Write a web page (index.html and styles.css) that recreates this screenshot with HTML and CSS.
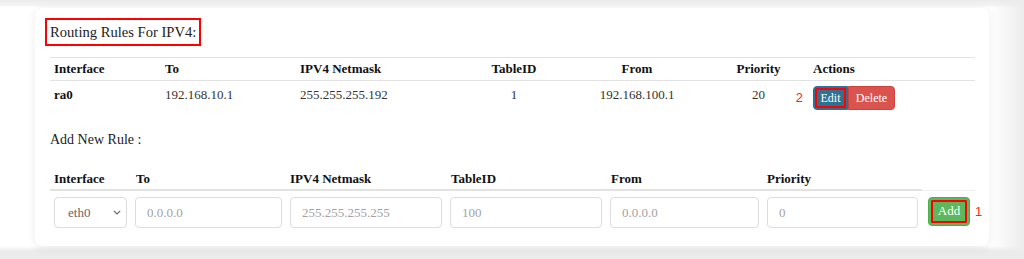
FILE: index.html
```html
<!DOCTYPE html>
<html lang="en">
<head>
  <meta charset="UTF-8">
  <title>Routing Rules</title>
  <link rel="stylesheet" href="styles.css">
</head>
<body>

  <div class="card">
    <h3 class="title">Routing Rules For IPV4:</h3>

    <table class="rules">
      <colgroup>
        <col style="width:111px">
        <col style="width:135px">
        <col style="width:154px">
        <col style="width:128px">
        <col style="width:118px">
        <col style="width:113px">
        <col>
      </colgroup>
      <thead>
        <tr>
          <th>Interface</th>
          <th>To</th>
          <th>IPV4 Netmask</th>
          <th class="center">TableID</th>
          <th class="center">From</th>
          <th class="center prio">Priority</th>
          <th>Actions</th>
        </tr>
      </thead>
      <tbody>
        <tr>
          <td class="bold">ra0</td>
          <td>192.168.10.1</td>
          <td>255.255.255.192</td>
          <td class="center">1</td>
          <td class="center">192.168.100.1</td>
          <td class="center prio">20</td>
          <td>
            <div class="actions">
              <span class="mark mark-left">2</span>
              <button class="btn btn-edit">Edit</button><button class="btn btn-delete">Delete</button>
            </div>
          </td>
        </tr>
      </tbody>
    </table>

    <p class="subtitle">Add New Rule :</p>

    <table class="new-rule">
      <colgroup>
        <col style="width:81px">
        <col style="width:155px">
        <col style="width:160px">
        <col style="width:160px">
        <col style="width:157px">
        <col style="width:159px">
        <col>
      </colgroup>
      <thead>
        <tr>
          <th>Interface</th>
          <th class="shift">To</th>
          <th>IPV4 Netmask</th>
          <th class="shift">TableID</th>
          <th class="shift">From</th>
          <th>Priority</th>
          <th class="blank"></th>
        </tr>
      </thead>
      <tbody>
        <tr>
          <td>
            <div class="select-wrap">
              <select class="field select">
                <option>eth0</option>
                <option>ra0</option>
              </select>
              <svg class="chevron" width="8" height="5" viewBox="0 0 8 5">
                <path d="M0.8 0.8 L4 4 L7.2 0.8" fill="none" stroke="#666" stroke-width="1.1"/>
              </svg>
            </div>
          </td>
          <td><input class="field" type="text" placeholder="0.0.0.0"></td>
          <td><input class="field" type="text" placeholder="255.255.255.255"></td>
          <td><input class="field" type="text" placeholder="100"></td>
          <td><input class="field" type="text" placeholder="0.0.0.0"></td>
          <td><input class="field" type="text" placeholder="0"></td>
          <td class="add-cell">
            <div class="actions">
              <button class="btn btn-add">Add</button>
              <span class="mark mark-right">1</span>
            </div>
          </td>
        </tr>
      </tbody>
    </table>
  </div>

</body>
</html>
```

FILE: styles.css
```css
body {
  margin: 0;
  padding: 8px 35px 12px 35px;
  font-family: "Liberation Serif", "Times New Roman", serif;
  color: #333;
  background:
    linear-gradient(to right, rgba(235, 235, 235, 0) 990px, #ececec 1024px),
    linear-gradient(#ebebeb 0, #f3f3f3 5px, #fff 8px, #fff 246px, #ebebeb 251px);
}

.card {
  background: #fff;
  border-radius: 8px;
  padding: 10px 14px 18px 15px;
  box-shadow: 0 2px 10px rgba(0, 0, 0, 0.08);
}

.title {
  display: inline-block;
  margin: 0 0 11px -5px;
  padding: 2px 3px 2px 3px;
  border: 2px solid #f00;
  font-size: 14.6px;
  font-weight: normal;
  line-height: 20px;
  color: #222;
}

table {
  width: 925px;
  border-collapse: collapse;
  table-layout: fixed;
  font-family: "Liberation Serif", "Times New Roman", serif;
}

th {
  text-align: left;
  font-size: 13px;
  font-weight: bold;
  color: #111;
  padding: 0 4px;
}

.rules th {
  line-height: 22px;
  border-top: 1px solid #e2e2e2;
  border-bottom: 1px solid #e2e2e2;
}

.rules td {
  font-size: 13px;
  line-height: 18px;
  padding: 5px 4px 6px 4px;
  vertical-align: top;
  color: #333;
}

.rules td.bold {
  font-weight: bold;
  color: #111;
}

.center {
  text-align: center;
}

.rules .prio {
  padding-left: 16px;
}

.actions {
  position: relative;
  display: flex;
  align-items: center;
}

.mark {
  position: absolute;
  top: 50%;
  transform: translateY(-50%);
  font-family: "Liberation Sans", Arial, sans-serif;
  font-size: 13px;
  color: #f22;
}

.mark-left {
  right: calc(100% + 10px);
  top: 12px;
}

.mark-right {
  left: calc(100% + 4px);
}

.btn {
  font-family: "Liberation Serif", "Times New Roman", serif;
  color: #fff;
  border: 1px solid transparent;
  cursor: pointer;
}

.btn-edit {
  width: 35px;
  height: 24px;
  padding: 0;
  font-size: 12px;
  background-color: #31708f;
  border-color: #2e6da4;
  border-radius: 4px 0 0 4px;
  outline: 2px solid #f00;
  outline-offset: -4px;
}

.btn-delete {
  width: 47px;
  height: 24px;
  padding: 0;
  font-size: 12px;
  background-color: #d9534f;
  border-color: #d43f3a;
  border-radius: 0 4px 4px 0;
}

.subtitle {
  margin: 15px 0 0 0;
  font-size: 14px;
  line-height: 18px;
  color: #222;
}

.new-rule {
  margin-top: 20px;
}

.new-rule th {
  line-height: 20px;
  border-bottom: 2px solid #e2e2e2;
}

.new-rule th.shift {
  padding-left: 5px;
}

.new-rule th.blank {
  border-bottom: 1px solid #eee;
}

.new-rule td {
  padding: 6px 4px 0 4px;
}

.field {
  box-sizing: border-box;
  width: 100%;
  height: 31px;
  border: 1px solid #ddd;
  border-radius: 4px;
  padding: 0 11px;
  font-family: "Liberation Serif", "Times New Roman", serif;
  font-size: 13px;
  color: #555;
  background: #fff;
}

.field::placeholder {
  color: #a3a3a3;
}

.select-wrap {
  position: relative;
}

.select {
  appearance: none;
  padding-left: 13px;
  color: #666;
}

.chevron {
  position: absolute;
  right: 6px;
  top: 13px;
  pointer-events: none;
}

.new-rule td.add-cell {
  padding-left: 6px;
  vertical-align: top;
}

.btn-add {
  width: 42px;
  height: 29px;
  padding: 0;
  font-size: 13px;
  background-color: #5cb85c;
  border-color: #4cae4c;
  border-radius: 4px;
  outline: 2px solid #f00;
  outline-offset: -5px;
}
```
